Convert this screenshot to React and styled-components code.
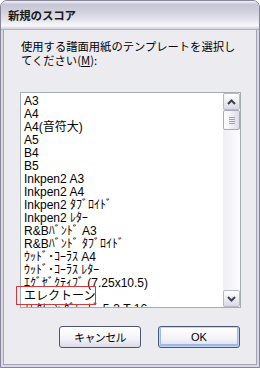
import React from 'react';
import styled, { createGlobalStyle } from 'styled-components';

const GlobalStyle = createGlobalStyle`
  html, body {
    margin: 0;
    padding: 0;
    background: #ffffff;
    overflow: hidden;
  }
  body {
    font-family: "Liberation Sans", "Noto Sans CJK JP", sans-serif;
  }
`;

const Window = styled.div`
  position: relative;
  width: 260px;
  height: 368px;
  box-sizing: border-box;
  display: flex;
  flex-direction: column;
  background: #d9d8e3;
  border: 1px solid #86859a;
  border-radius: 7px 7px 0 0;
  overflow: hidden;
`;

const TitleBar = styled.div`
  height: 28px;
  flex: none;
  display: flex;
  align-items: center;
  padding-left: 7px;
  background: linear-gradient(
    to bottom,
    #f4f4f8 0%,
    #c6c5d5 12%,
    #d2d1de 40%,
    #e6e6ee 70%,
    #f8f8fb 88%,
    #cfcedb 100%
  );
  border-bottom: 1px solid #b3b2c4;
`;

const Title = styled.span`
  font-family: "Noto Sans CJK JP", sans-serif;
  font-weight: 700;
  font-size: 11.5px;
  color: #1a1a1a;
  letter-spacing: -0.2px;
`;

const Body = styled.div`
  flex: 1;
  margin: 0 2px 2px;
  display: flex;
  flex-direction: column;
  background: #ecebf0;
  border: 1px solid #a4a3b5;
  border-top: none;
  padding: 9px 15px 0 16px;
`;

const Prompt = styled.div`
  font-family: "Noto Sans CJK JP", sans-serif;
  font-size: 11.3px;
  line-height: 14px;
  color: #000;
  margin-left: 1px;
  white-space: nowrap;
`;

const Mnemonic = styled.span`
  text-decoration: underline;
`;

const ListBox = styled.div`
  margin-top: 25px;
  height: 216px;
  box-sizing: border-box;
  display: flex;
  background: #fff;
  border: 1px solid #a5acb2;
`;

const Items = styled.ul`
  flex: 1;
  margin: 0;
  padding: 2px 0 0 3px;
  list-style: none;
  overflow: hidden;
`;

const Item = styled.li`
  height: 13px;
  line-height: 13px;
  font-size: 12px;
  color: #000;
  white-space: nowrap;
`;

const ScrollBar = styled.div`
  width: 17px;
  flex: none;
  display: flex;
  flex-direction: column;
  background: linear-gradient(to right, #eeeef4, #fdfdfe);
`;

const ArrowButton = styled.div`
  height: 17px;
  box-sizing: border-box;
  display: flex;
  align-items: center;
  justify-content: center;
  border: 1px solid #b9b8c8;
  border-radius: 2px;
  background: linear-gradient(to bottom, #ffffff, #d9d9e4);
  margin-top: ${({ $bottom }) => ($bottom ? 'auto' : '0')};
`;

const Thumb = styled.div`
  height: 20px;
  box-sizing: border-box;
  display: flex;
  flex-direction: column;
  align-items: center;
  justify-content: center;
  gap: 1px;
  border: 1px solid #a9a8bc;
  border-radius: 2px;
  background: linear-gradient(to right, #ffffff, #dedde8);
`;

const Grip = styled.span`
  width: 6px;
  height: 1px;
  background: #9d9cb0;
`;

const Footer = styled.div`
  margin-top: 18px;
  display: flex;
  justify-content: flex-end;
  gap: 17px;
  padding-right: 1px;
`;

const Button = styled.button`
  width: 82px;
  height: 22px;
  box-sizing: border-box;
  padding: 0;
  border: 1px solid #4b5674;
  border-radius: 3px;
  background: linear-gradient(to bottom, #ffffff 0%, #f4f4f8 55%, #dcdbe6 100%);
  font-family: "Liberation Sans", "Noto Sans CJK JP", sans-serif;
  font-size: 11px;
  color: #000;
  letter-spacing: ${({ $tight }) => ($tight ? '-0.6px' : '0')};
  box-shadow: ${({ $primary }) =>
    $primary ? 'inset 0 0 0 1px #c4d6f4, inset 0 -1px 0 2px #9ab8e8' : 'none'};
`;

const Highlight = styled.div`
  position: absolute;
  left: 15px;
  top: 285px;
  width: 80px;
  height: 19px;
  box-sizing: border-box;
  border: 1px solid #d4393d;
  pointer-events: none;
`;

const Chevron = ({ up }) => (
  <svg width="9" height="6" viewBox="0 0 9 6">
    <path
      d={up ? 'M1 5 L4.5 1.5 L8 5' : 'M1 1 L4.5 4.5 L8 1'}
      fill="none"
      stroke="#3d3d55"
      strokeWidth="2"
    />
  </svg>
);

const templates = [
  'A3',
  'A4',
  'A4(音符大)',
  'A5',
  'B4',
  'B5',
  'Inkpen2 A3',
  'Inkpen2 A4',
  'Inkpen2 ﾀﾌﾞﾛｲﾄﾞ',
  'Inkpen2 ﾚﾀｰ',
  'R&Bﾊﾞﾝﾄﾞ A3',
  'R&Bﾊﾞﾝﾄﾞ ﾀﾌﾞﾛｲﾄﾞ',
  'ｳｯﾄﾞ･ｺｰﾗｽ A4',
  'ｳｯﾄﾞ･ｺｰﾗｽ ﾚﾀｰ',
  'ｴｸﾞｾﾞｸﾃｨﾌﾞ (7.25x10.5)',
  'エレクトーン',
  'ｴﾚｸﾄｰﾝ ｸﾞﾚｰﾄﾞ 5-3 T 16',
];

export default function App() {
  return (
    <>
      <GlobalStyle />
      <Window>
        <TitleBar>
          <Title>新規のスコア</Title>
        </TitleBar>
        <Body>
          <Prompt>
            使用する譜面用紙のテンプレートを選択し
            <br />
            てください(<Mnemonic>M</Mnemonic>):
          </Prompt>
          <ListBox>
            <Items>
              {templates.map((t) => (
                <Item key={t}>{t}</Item>
              ))}
            </Items>
            <ScrollBar>
              <ArrowButton>
                <Chevron up />
              </ArrowButton>
              <Thumb>
                <Grip />
                <Grip />
                <Grip />
                <Grip />
              </Thumb>
              <ArrowButton $bottom>
                <Chevron />
              </ArrowButton>
            </ScrollBar>
          </ListBox>
          <Footer>
            <Button $tight>キャンセル</Button>
            <Button $primary>OK</Button>
          </Footer>
        </Body>
        <Highlight />
      </Window>
    </>
  );
}
